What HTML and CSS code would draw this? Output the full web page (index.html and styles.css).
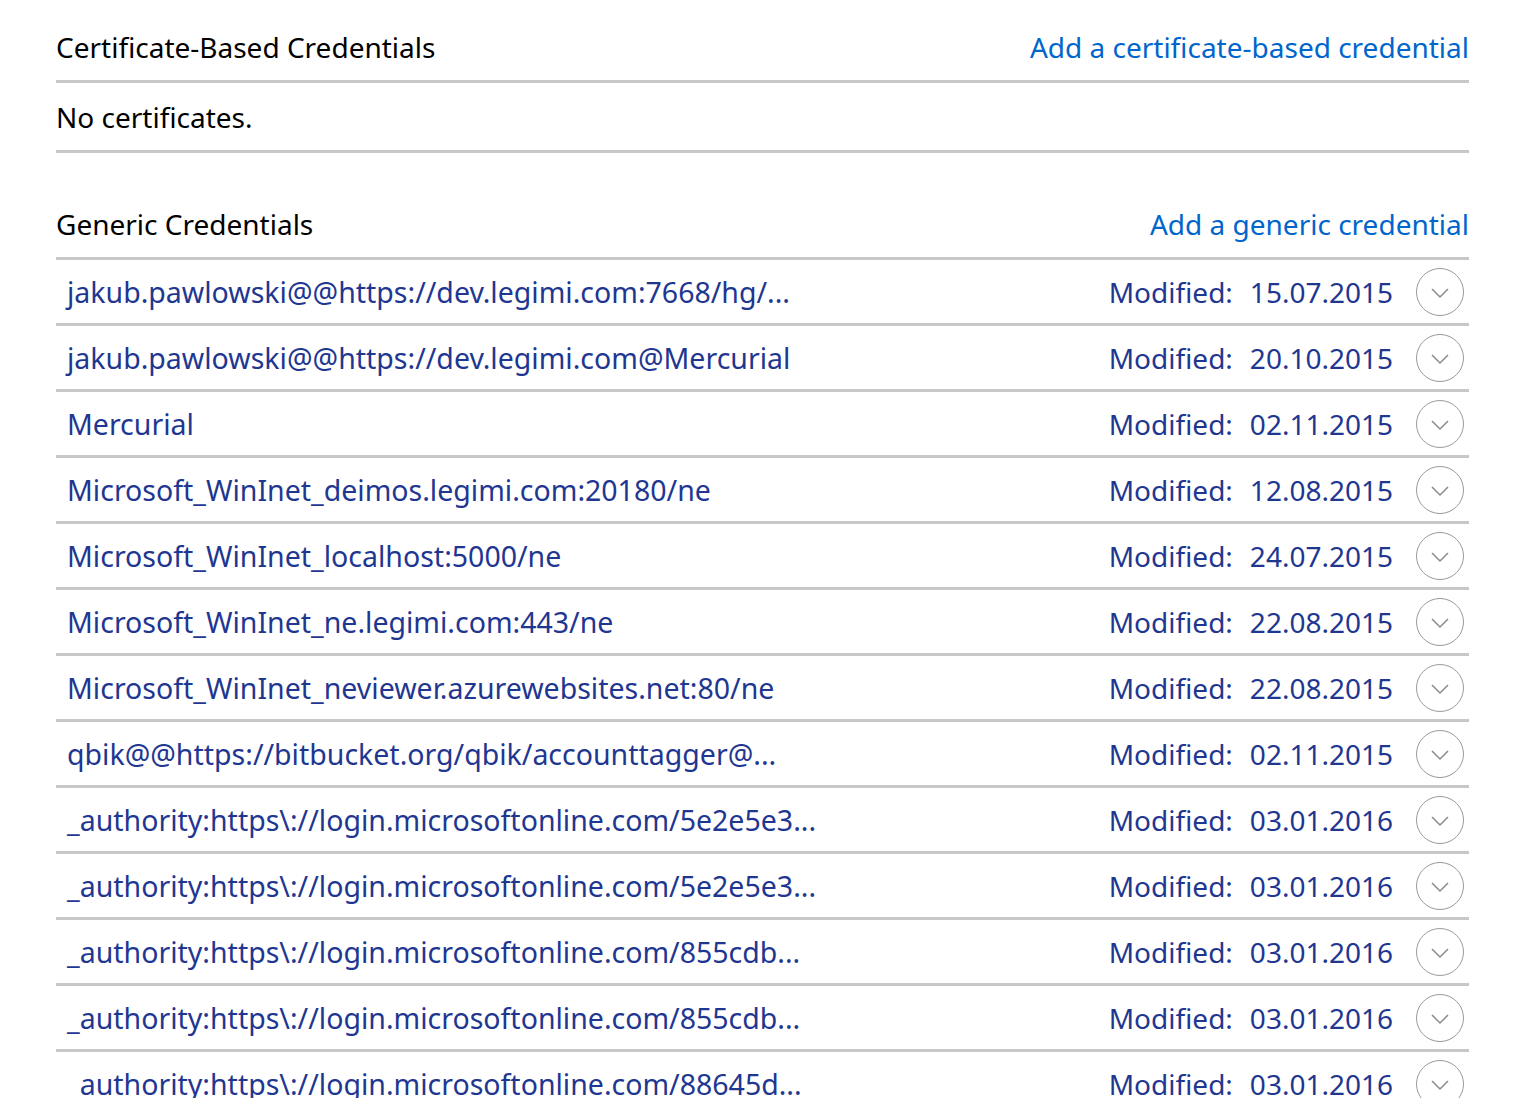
FILE: index.html
```html
<!DOCTYPE html>
<html>
<head>
<meta charset="utf-8">
<link rel="stylesheet" href="styles.css">
</head>
<body>
<main class="page">
  <section class="section">
    <div class="section-head">
      <span class="title">Certificate-Based Credentials</span>
      <a class="add-link" href="#">Add a certificate-based credential</a>
    </div>
    <div class="empty">No certificates.</div>
  </section>

  <section class="section generic">
    <div class="section-head">
      <span class="title">Generic Credentials</span>
      <a class="add-link" href="#">Add a generic credential</a>
    </div>
    <ul class="list">
      <li class="row"><span class="name">jakub.pawlowski@@https://dev.legimi.com:7668/hg/...</span><span class="mod">Modified:</span><span class="date">15.07.2015</span><button class="expand"><svg viewBox="0 0 20 20" width="20" height="20"><path d="M2 6 L10 14 L18 6"/></svg></button></li>
      <li class="row"><span class="name">jakub.pawlowski@@https://dev.legimi.com@Mercurial</span><span class="mod">Modified:</span><span class="date">20.10.2015</span><button class="expand"><svg viewBox="0 0 20 20" width="20" height="20"><path d="M2 6 L10 14 L18 6"/></svg></button></li>
      <li class="row"><span class="name">Mercurial</span><span class="mod">Modified:</span><span class="date">02.11.2015</span><button class="expand"><svg viewBox="0 0 20 20" width="20" height="20"><path d="M2 6 L10 14 L18 6"/></svg></button></li>
      <li class="row"><span class="name">Microsoft_WinInet_deimos.legimi.com:20180/ne</span><span class="mod">Modified:</span><span class="date">12.08.2015</span><button class="expand"><svg viewBox="0 0 20 20" width="20" height="20"><path d="M2 6 L10 14 L18 6"/></svg></button></li>
      <li class="row"><span class="name">Microsoft_WinInet_localhost:5000/ne</span><span class="mod">Modified:</span><span class="date">24.07.2015</span><button class="expand"><svg viewBox="0 0 20 20" width="20" height="20"><path d="M2 6 L10 14 L18 6"/></svg></button></li>
      <li class="row"><span class="name">Microsoft_WinInet_ne.legimi.com:443/ne</span><span class="mod">Modified:</span><span class="date">22.08.2015</span><button class="expand"><svg viewBox="0 0 20 20" width="20" height="20"><path d="M2 6 L10 14 L18 6"/></svg></button></li>
      <li class="row"><span class="name">Microsoft_WinInet_neviewer.azurewebsites.net:80/ne</span><span class="mod">Modified:</span><span class="date">22.08.2015</span><button class="expand"><svg viewBox="0 0 20 20" width="20" height="20"><path d="M2 6 L10 14 L18 6"/></svg></button></li>
      <li class="row"><span class="name">qbik@@https://bitbucket.org/qbik/accounttagger@...</span><span class="mod">Modified:</span><span class="date">02.11.2015</span><button class="expand"><svg viewBox="0 0 20 20" width="20" height="20"><path d="M2 6 L10 14 L18 6"/></svg></button></li>
      <li class="row"><span class="name">_authority:https\://login.microsoftonline.com/5e2e5e3...</span><span class="mod">Modified:</span><span class="date">03.01.2016</span><button class="expand"><svg viewBox="0 0 20 20" width="20" height="20"><path d="M2 6 L10 14 L18 6"/></svg></button></li>
      <li class="row"><span class="name">_authority:https\://login.microsoftonline.com/5e2e5e3...</span><span class="mod">Modified:</span><span class="date">03.01.2016</span><button class="expand"><svg viewBox="0 0 20 20" width="20" height="20"><path d="M2 6 L10 14 L18 6"/></svg></button></li>
      <li class="row"><span class="name">_authority:https\://login.microsoftonline.com/855cdb...</span><span class="mod">Modified:</span><span class="date">03.01.2016</span><button class="expand"><svg viewBox="0 0 20 20" width="20" height="20"><path d="M2 6 L10 14 L18 6"/></svg></button></li>
      <li class="row"><span class="name">_authority:https\://login.microsoftonline.com/855cdb...</span><span class="mod">Modified:</span><span class="date">03.01.2016</span><button class="expand"><svg viewBox="0 0 20 20" width="20" height="20"><path d="M2 6 L10 14 L18 6"/></svg></button></li>
      <li class="row"><span class="name">_authority:https\://login.microsoftonline.com/88645d...</span><span class="mod">Modified:</span><span class="date">03.01.2016</span><button class="expand"><svg viewBox="0 0 20 20" width="20" height="20"><path d="M2 6 L10 14 L18 6"/></svg></button></li>
    </ul>
  </section>
</main>
</body>
</html>
```

FILE: styles.css
```css
html, body {
  margin: 0;
  padding: 0;
  background: #ffffff;
  overflow: hidden;
}

body {
  font-family: "Noto Sans", "Open Sans", sans-serif;
  font-size: 28px;
  color: #000000;
}

.page {
  padding: 14px 61px 0 56px;
}

.section-head {
  display: flex;
  justify-content: space-between;
  align-items: center;
  height: 66px;
  border-bottom: 3px solid #c8c8c8;
}

.title {
  color: #000000;
}

.add-link {
  color: #0066cc;
  text-decoration: none;
}

.empty {
  display: flex;
  align-items: center;
  height: 67px;
  border-bottom: 3px solid #c8c8c8;
}

.generic {
  margin-top: 38px;
}

.list {
  list-style: none;
  margin: 0;
  padding: 0;
}

.row {
  display: flex;
  align-items: center;
  height: 63px;
  border-bottom: 3px solid #c8c8c8;
  color: #1f3791;
}

.name {
  flex: 1;
  padding-left: 11px;
  white-space: nowrap;
  font-size: 28.5px;
}

.mod {
  margin-right: 17px;
}

.date {
  margin-right: 23px;
}

.expand {
  flex: none;
  width: 48px;
  height: 48px;
  margin-right: 5px;
  border: 1px solid #9a9a9a;
  border-radius: 50%;
  background: #ffffff;
  padding: 0;
  display: flex;
  align-items: center;
  justify-content: center;
}

.expand svg {
  width: 20px;
  height: 20px;
  margin-top: 2px;
}

.expand path {
  fill: none;
  stroke: #8a8a8a;
  stroke-width: 1.5;
}
```
